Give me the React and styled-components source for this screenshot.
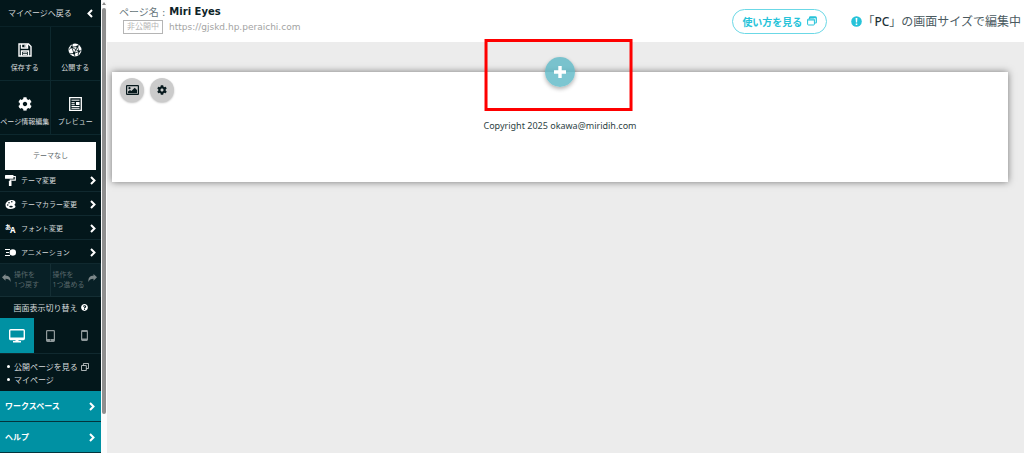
import styled, { createGlobalStyle } from 'styled-components';
import { FaCog, FaQuestionCircle } from 'react-icons/fa';

const GlobalStyle = createGlobalStyle`
  * {
    box-sizing: border-box;
  }
  body {
    margin: 0;
    background: #ececec;
    color: #33474d;
    font-family: 'Noto Sans', 'Noto Sans CJK JP', sans-serif;
  }
  button {
    margin: 0;
    padding: 0;
    border: 0;
    background: none;
    color: inherit;
    font: inherit;
    cursor: pointer;
  }
  a {
    color: inherit;
    text-decoration: none;
  }
  svg {
    display: block;
    flex: none;
  }
`;

const Page = styled.div`
  display: flex;
  min-height: 100vh;
`;

const Sidebar = styled.nav`
  width: 101px;
  flex: none;
  background: #03171b;
  color: #d5dadb;
  font-size: 8px;
  line-height: 12px;
`;

const ScrollBar = styled.div`
  width: 6px;
  height: 100vh;
  flex: none;
  display: flex;
  flex-direction: column;
  align-items: center;
  gap: 3px;
  padding-top: 2px;
  background: #fcfcfc;
`;

const ScrollArrow = styled.div`
  border: 2px solid transparent;
  border-top: 0;
  border-bottom: 3px solid #8b8b8b;
`;

const ScrollThumb = styled.div`
  width: 4px;
  height: 90%;
  border-radius: 2px;
  background: #8f8f8f;
`;

const BackButton = styled.button`
  width: 100%;
  height: 27px;
  display: flex;
  align-items: center;
  justify-content: space-between;
  padding: 0 8px;
  border-bottom: 1px solid #0a2228;
  font-size: 8px;
`;

const ToolGrid = styled.div`
  display: grid;
  grid-template-columns: repeat(2, minmax(0, 1fr));
`;

const Tool = styled.button`
  height: 54px;
  display: flex;
  flex-direction: column;
  align-items: center;
  justify-content: center;
  gap: 5px;
  padding-top: 10px;
  border-right: 1px solid #0d282e;
  border-bottom: 1px solid #0d282e;
  font-size: 7px;
  white-space: nowrap;
  svg {
    color: #fff;
  }
`;

const ThemeName = styled.div`
  height: 28px;
  margin: 7px 5px -2px;
  display: flex;
  align-items: center;
  justify-content: center;
  background: #fff;
  color: #5c6769;
  font-size: 7px;
`;

const MenuItem = styled.button`
  width: 100%;
  height: 24px;
  display: flex;
  align-items: center;
  gap: 5px;
  padding: 2px 5px 0;
  border-bottom: 1px solid #10292f;
  font-size: 7px;
  text-align: left;
  span {
    flex: 1;
    white-space: nowrap;
  }
  svg {
    color: #fff;
  }
`;

const History = styled.div`
  display: grid;
  grid-template-columns: repeat(2, minmax(0, 1fr));
  background: #082026;
  border-bottom: 1px solid #142e34;
`;

const HistoryButton = styled.button`
  height: 32px;
  display: flex;
  align-items: center;
  gap: 3px;
  padding: 0 2px;
  border-right: 1px solid #142e34;
  color: #59686b;
  font-size: 7px;
  line-height: 10px;
  text-align: left;
  white-space: nowrap;
  svg {
    color: #7c8789;
    margin-bottom: 4px;
  }
`;

const SwitchTitle = styled.div`
  height: 21px;
  display: flex;
  align-items: center;
  justify-content: center;
  gap: 3px;
`;

const Devices = styled.div`
  display: grid;
  grid-template-columns: repeat(3, 1fr);
  border-bottom: 1px solid #10292f;
`;

const Device = styled.button`
  height: 35px;
  display: flex;
  align-items: center;
  justify-content: center;
  background: ${props => (props.$active ? '#0091a3' : 'transparent')};
  color: ${props => (props.$active ? '#fff' : '#8f999b')};
`;

const Links = styled.ul`
  margin: 0;
  padding: 6px 0 5px 14px;
  list-style: none;
  line-height: 13px;
  li {
    position: relative;
  }
  li::before {
    content: '';
    position: absolute;
    left: -7px;
    top: 5px;
    width: 3px;
    height: 3px;
    border-radius: 50%;
    background: #fff;
  }
  a {
    display: flex;
    align-items: center;
    gap: 3px;
    white-space: nowrap;
  }
`;

const BottomButton = styled.button`
  width: 100%;
  height: 31px;
  display: flex;
  align-items: center;
  justify-content: space-between;
  padding: 0 6px 0 5px;
  border-bottom: 1px solid #03343c;
  background: #0091a3;
  color: #fff;
  font-size: 8px;
  font-weight: 700;
`;

const Main = styled.main`
  flex: 1;
  min-width: 0;
`;

const Header = styled.header`
  height: 42px;
  display: flex;
  align-items: center;
  padding: 0 3px 0 12px;
  background: #fff;
  white-space: nowrap;
`;

const PageInfo = styled.div`
  flex: 1;
  padding-bottom: 4px;
  font-family: 'DejaVu Sans', 'Noto Sans CJK JP', sans-serif;
  font-size: 9px;
`;

const PageTitle = styled.div`
  height: 16px;
  display: flex;
  align-items: center;
  gap: 4px;
  color: #65757a;
  font-size: 10px;
  strong {
    color: #0d2328;
  }
`;

const PageUrl = styled.div`
  height: 16px;
  display: flex;
  align-items: center;
  gap: 6px;
  padding-left: 4px;
  color: #a3a3a3;
`;

const Status = styled.span`
  height: 14px;
  padding: 0 3px;
  border: 1px solid #b5b5b5;
  color: #b5b5b5;
  font-size: 8px;
  line-height: 12px;
`;

const GuideLink = styled.a`
  height: 25px;
  display: flex;
  align-items: center;
  gap: 5px;
  margin-right: 24px;
  padding: 0 9px;
  border: 1px solid #6bd8e6;
  border-radius: 13px;
  color: #26c3d9;
  font-size: 10px;
  font-weight: 700;
`;

const SizeNotice = styled.div`
  display: flex;
  align-items: center;
  font-size: 12px;
  color: #4a5a5f;
  b {
    color: #1d3238;
    font-weight: 500;
  }
`;

const Canvas = styled.div`
  padding: 30px 16px 30px 5px;
`;

const Block = styled.section`
  position: relative;
  min-height: 110px;
  padding: 46px 0;
  background: #fff;
  box-shadow: 0 0 7px rgba(0, 0, 0, 0.5);
  text-align: center;
  font-size: 9px;
  line-height: 16px;
`;

const BlockTools = styled.div`
  position: absolute;
  top: 6px;
  left: 8px;
  display: flex;
  gap: 6px;
`;

const RoundButton = styled.button`
  width: 24px;
  height: 24px;
  display: flex;
  align-items: center;
  justify-content: center;
  border-radius: 50%;
  background: #cbcbcb;
  box-shadow: 0 1px 2px rgba(0, 0, 0, 0.25);
  color: #07191d;
`;

const AddButton = styled.button`
  position: absolute;
  top: -15px;
  left: 50%;
  width: 30px;
  height: 30px;
  display: flex;
  align-items: center;
  justify-content: center;
  transform: translateX(-50%);
  border-radius: 50%;
  background: rgba(93, 184, 197, 0.8);
  box-shadow: 0 2px 4px rgba(0, 0, 0, 0.3);
  color: #fff;
`;

const Highlight = styled.div`
  position: absolute;
  top: -33px;
  left: 50%;
  width: 148px;
  height: 72px;
  transform: translateX(-51%);
  border: 3px solid #fe0000;
  pointer-events: none;
`;

const Copyright = styled.p`
  margin: 0;
  color: #2d3f44;
`;

const ChevronRight = () => (
  <svg width="6" height="9" viewBox="0 0 6 9">
    <path d="M1 1l3.500 3.500L1 8" fill="none" stroke="currentColor" strokeWidth="2" />
  </svg>
);

const ChevronLeft = () => (
  <svg width="6" height="9" viewBox="0 0 6 9">
    <path d="M5 1L1.500 4.500 5 8" fill="none" stroke="#fff" strokeWidth="2" />
  </svg>
);

const PlusIcon = () => (
  <svg width="12" height="12" viewBox="0 0 12 12">
    <path d="M6 0v12M0 6h12" stroke="currentColor" strokeWidth="3.400" />
  </svg>
);

const SaveIcon = () => (
  <svg width="14" height="14" viewBox="0 0 14 14" fill="none" stroke="currentColor" strokeWidth="1.4">
    <path d="M1 1h9.5L13 3.5V13H1z" />
    <path d="M3.5 1v4h6V1M3.5 13V8h7v5" />
    <path d="M7 2h1.6v2H7zM5 9.8h4M5 11.6h4" strokeWidth="1" />
  </svg>
);

const PublishIcon = () => (
  <svg width="14" height="14" viewBox="0 0 14 14">
    <circle cx="7" cy="7" r="6.5" fill="currentColor" />
    <g fill="none" stroke="#03171b" strokeWidth=".8">
      <path d="M3.7 4.2 9.4 3.5 11 8.4 6 10.4zM3.7 4.2 11 8.4M9.4 3.5 6 10.4M1 6.5l2.7-2.3L4.4 1M9.4 3.5l1.5-2M11 8.4l2.4-.9M6 10.4 7 13.4M6 10.4l-4 .4M11 8.4l-1 3.8" />
    </g>
    <g fill="#03171b">
      <circle cx="3.7" cy="4.2" r="1.1" />
      <circle cx="9.4" cy="3.5" r="1.1" />
      <circle cx="11" cy="8.4" r="1" />
      <circle cx="6" cy="10.4" r="1.1" />
    </g>
  </svg>
);

const PreviewIcon = () => (
  <svg width="13" height="14" viewBox="0 0 13 14" fill="none" stroke="currentColor">
    <path d="M.7.7h11.6v12.6H.7z" strokeWidth="1.3" />
    <path d="M2.5 3.2h8M2.5 5.7h3.2M2.5 7.7h3.2M2.5 9.5h8M2.5 11.3h8" strokeWidth="1" />
    <path d="M7 5h3.5v3H7z" fill="currentColor" stroke="none" />
  </svg>
);

const RollerIcon = () => (
  <svg width="11" height="11" viewBox="0 0 11 11">
    <rect width="8.5" height="3.8" rx=".6" fill="currentColor" />
    <path d="M8 1.5h2.3v3.6H5.2v2" fill="none" stroke="currentColor" strokeWidth="1.1" />
    <rect x="3.9" y="6" width="2.6" height="5" rx=".6" fill="currentColor" />
  </svg>
);

const PaletteIcon = () => (
  <svg width="11" height="11" viewBox="0 0 11 11">
    <path d="M7 1C3.3 1 .5 3.2.5 6c0 2.4 2 4 4.8 4 2.900 0 5.200-1 5.200-2.500 0-.9-1-1-1-1.800 0-.8 1-.8 1-2C10.500 2.100 9 1 7 1z" fill="currentColor" />
    <g fill="#03171b">
      <circle cx="4" cy="3.700" r=".8" />
      <circle cx="6.800" cy="2.800" r=".8" />
      <circle cx="2.700" cy="6" r=".8" />
      <ellipse cx="6" cy="7.600" rx="1.800" ry=".9" />
    </g>
  </svg>
);

const FontIcon = () => (
  <svg width="11" height="11" viewBox="0 0 11 11" fill="currentColor" fontWeight="700">
    <text x="0" y="6" fontSize="6" fontFamily="Noto Sans CJK JP, sans-serif">あ</text>
    <text x="5" y="10" fontSize="8" fontFamily="Noto Sans, sans-serif">A</text>
  </svg>
);

const MotionIcon = () => (
  <svg width="11" height="11" viewBox="0 0 11 11">
    <path d="M0 2.500h5M1 5.500h3M0 8.500h5" stroke="currentColor" strokeWidth="1.200" />
    <circle cx="7.800" cy="5.500" r="3.200" fill="currentColor" />
  </svg>
);

const UndoIcon = () => (
  <svg width="9" height="8" viewBox="0 0 9 8">
    <path d="M3.500 0v1.800C7 1.800 9 3.500 8.500 8 7.700 5.600 6.200 4.800 3.500 4.800v1.900L0 3.300z" fill="currentColor" />
  </svg>
);

const RedoIcon = () => (
  <svg width="9" height="8" viewBox="0 0 9 8">
    <path d="M5.500 0v1.800C2 1.800 0 3.500.5 8 1.300 5.600 2.800 4.800 5.500 4.800v1.900L9 3.300z" fill="currentColor" />
  </svg>
);

const DesktopIcon = () => (
  <svg width="16" height="14" viewBox="0 0 16 14">
    <rect x=".7" y=".7" width="14.600" height="9.800" rx="1" fill="none" stroke="currentColor" strokeWidth="1.400" />
    <path d="M1 8.500h14v2H1zM6.500 10h3v2H12v1.500H4V12h2.500z" fill="currentColor" />
  </svg>
);

const TabletIcon = () => (
  <svg width="9" height="12" viewBox="0 0 9 12">
    <rect x=".6" y=".6" width="7.800" height="10.800" rx=".8" fill="none" stroke="currentColor" strokeWidth="1.200" />
    <path d="M1 9h7v2H1z" fill="currentColor" />
    <circle cx="4.500" cy="10" r=".6" fill="#03171b" />
  </svg>
);

const PhoneIcon = () => (
  <svg width="7" height="11" viewBox="0 0 7 11">
    <rect x=".6" y=".6" width="5.800" height="9.800" rx=".8" fill="none" stroke="currentColor" strokeWidth="1.200" />
    <path d="M1 .5h5v1.500H1zM1 8.500h5v2H1z" fill="currentColor" />
  </svg>
);

const WindowsIcon = () => (
  <svg width="8" height="8" viewBox="0 0 8 8" fill="none" stroke="currentColor" strokeWidth=".8">
    <path d="M.5 2.500h4.800v5H.5zM2.400 2.500v-2h5.100v5H5.300" />
  </svg>
);

const GuideIcon = () => (
  <svg width="10" height="10" viewBox="0 0 10 10" fill="none" stroke="currentColor">
    <rect x=".6" y="3" width="6.800" height="6" rx=".8" />
    <path d="M.6 4h6.800M2.600 3V1.600q0-.8.8-.8h5q.9 0 .9.900v4.500q0 .8-.8.800H7.400M2.600 1.600h6.700" strokeWidth="1.200" />
  </svg>
);

const AlertIcon = () => (
  <svg width="11" height="11" viewBox="0 0 11 11">
    <circle cx="5.500" cy="5.500" r="5.300" fill="#26c3d9" />
    <path d="M4.600 2h1.800l-.3 4.500H4.900zM4.700 7.400h1.600V9H4.700z" fill="#fff" />
  </svg>
);

const ImageIcon = () => (
  <svg width="13" height="10" viewBox="0 0 13 10">
    <rect x=".6" y=".6" width="11.800" height="8.800" rx=".5" fill="none" stroke="currentColor" strokeWidth="1.200" />
    <circle cx="3.500" cy="3.200" r="1.100" fill="currentColor" />
    <path d="M2 8.200V6.600l2-1.600 1.400 1 3.300-3.200L11 5v3.200z" fill="currentColor" />
  </svg>
);

const tools = [
  { label: '保存する', icon: <SaveIcon /> },
  { label: '公開する', icon: <PublishIcon /> },
  { label: 'ページ情報編集', icon: <FaCog size={14} /> },
  { label: 'プレビュー', icon: <PreviewIcon /> },
];

const menus = [
  { label: 'テーマ変更', icon: <RollerIcon /> },
  { label: 'テーマカラー変更', icon: <PaletteIcon /> },
  { label: 'フォント変更', icon: <FontIcon /> },
  { label: 'アニメーション', icon: <MotionIcon /> },
];

function App() {
  return (
    <Page>
      <GlobalStyle />
      <Sidebar>
        <BackButton>
          マイページへ戻る
          <ChevronLeft />
        </BackButton>
        <ToolGrid>
          {tools.map(tool => (
            <Tool key={tool.label}>
              {tool.icon}
              {tool.label}
            </Tool>
          ))}
        </ToolGrid>
        <ThemeName>テーマなし</ThemeName>
        {menus.map(menu => (
          <MenuItem key={menu.label}>
            {menu.icon}
            <span>{menu.label}</span>
            <ChevronRight />
          </MenuItem>
        ))}
        <History>
          <HistoryButton>
            <UndoIcon />
            <span>
              操作を
              <br />
              1つ戻す
            </span>
          </HistoryButton>
          <HistoryButton>
            <span>
              操作を
              <br />
              1つ進める
            </span>
            <RedoIcon />
          </HistoryButton>
        </History>
        <SwitchTitle>
          画面表示切り替え
          <FaQuestionCircle size={7} color="#fff" />
        </SwitchTitle>
        <Devices>
          <Device $active aria-label="PC">
            <DesktopIcon />
          </Device>
          <Device aria-label="タブレット">
            <TabletIcon />
          </Device>
          <Device aria-label="スマートフォン">
            <PhoneIcon />
          </Device>
        </Devices>
        <Links>
          <li>
            <a href="#public">
              公開ページを見る
              <WindowsIcon />
            </a>
          </li>
          <li>
            <a href="#mypage">マイページ</a>
          </li>
        </Links>
        <BottomButton>
          ワークスペース
          <ChevronRight />
        </BottomButton>
        <BottomButton>
          ヘルプ
          <ChevronRight />
        </BottomButton>
      </Sidebar>
      <ScrollBar>
        <ScrollArrow />
        <ScrollThumb />
      </ScrollBar>
      <Main>
        <Header>
          <PageInfo>
            <PageTitle>
              <span>ページ名 :</span>
              <strong>Miri Eyes</strong>
            </PageTitle>
            <PageUrl>
              <Status>非公開中</Status>
              <span>https://gjskd.hp.peraichi.com</span>
            </PageUrl>
          </PageInfo>
          <GuideLink href="#guide">
            使い方を見る
            <GuideIcon />
          </GuideLink>
          <SizeNotice>
            <AlertIcon />
            <span>
              「<b>PC</b>」の画面サイズで編集中
            </span>
          </SizeNotice>
        </Header>
        <Canvas>
          <Block>
            <BlockTools>
              <RoundButton aria-label="背景画像">
                <ImageIcon />
              </RoundButton>
              <RoundButton aria-label="設定">
                <FaCog size={10} />
              </RoundButton>
            </BlockTools>
            <AddButton aria-label="ブロックを追加">
              <PlusIcon />
            </AddButton>
            <Highlight />
            <Copyright>Copyright 2025 okawa@miridih.com</Copyright>
          </Block>
        </Canvas>
      </Main>
    </Page>
  );
}

export default App;
